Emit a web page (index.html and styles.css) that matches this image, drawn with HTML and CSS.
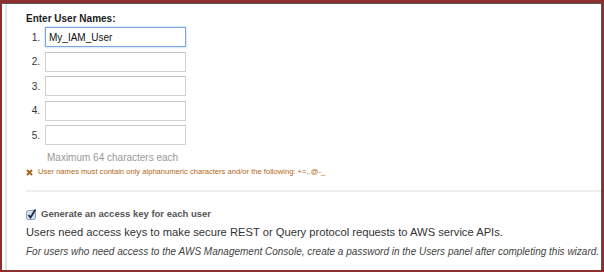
FILE: index.html
```html
<!DOCTYPE html>
<html lang="en">
<head>
  <meta charset="UTF-8">
  <title>Create User</title>
  <link rel="stylesheet" href="styles.css">
</head>
<body>

<div class="frame">
  <div class="inner">
    <div class="panel">
      <div class="title">Enter User Names:</div>

      <div class="name-rows">
        <label class="num" for="user1">1.</label>
        <input type="text" id="user1" class="name-input focused" value="My_IAM_User">
        <label class="num" for="user2">2.</label>
        <input type="text" id="user2" class="name-input">
        <label class="num" for="user3">3.</label>
        <input type="text" id="user3" class="name-input">
        <label class="num" for="user4">4.</label>
        <input type="text" id="user4" class="name-input">
        <label class="num" for="user5">5.</label>
        <input type="text" id="user5" class="name-input">
      </div>

      <div class="hint">Maximum 64 characters each</div>
      <div class="error">
        <svg width="7" height="7" viewBox="0 0 7 7"><path d="M1 1 L6 6 M6 1 L1 6" stroke="#a9651c" stroke-width="2"/></svg>
        <span>User names must contain only alphanumeric characters and/or the following: +=,.@-_</span>
      </div>

      <div class="separator"></div>

      <div class="check-row">
        <svg width="11" height="11" viewBox="0 0 11 11">
          <rect x="0.5" y="1.5" width="9" height="9" rx="2" fill="#cfdff2" stroke="#8a9bb0"/>
          <path d="M2.5 6 L4.5 8.5 L9.5 0.5" fill="none" stroke="#1c2c48" stroke-width="1.8"/>
        </svg>
        <span>Generate an access key for each user</span>
      </div>
      <p class="info">Users need access keys to make secure REST or Query protocol requests to AWS service APIs.</p>
      <p class="info note">For users who need access to the AWS Management Console, create a password in the Users panel after completing this wizard.</p>
    </div>
  </div>
</div>

</body>
</html>
```

FILE: styles.css
```css
body {
  margin: 0;
  font-family: 'Liberation Sans', Arial, sans-serif;
  background: #fff;
}

.frame {
  width: 604px;
  height: 272px;
  box-sizing: border-box;
  border: 2px solid #8e2e2e;
  border-top-width: 3px;
}

.inner {
  height: 100%;
  box-sizing: border-box;
  border-top: 1px solid #555;
  border-right: 1px solid #555;
  padding-left: 3px;
}

.panel {
  height: 100%;
  box-sizing: border-box;
  border-left: 2px solid #e2e2e2;
  padding: 9px 0 0 19px;
}

.title {
  font-size: 10px;
  font-weight: bold;
  line-height: 12px;
  color: #1a1a1a;
  margin-bottom: 2px;
}

.name-rows {
  display: grid;
  grid-template-columns: 14px 141px;
  column-gap: 5px;
  row-gap: 4.5px;
  align-items: center;
}

.num {
  font-size: 10px;
  color: #333;
  text-align: right;
}

.name-input {
  box-sizing: border-box;
  width: 141px;
  height: 20px;
  margin: 0;
  padding: 0 3px;
  border: 1px solid #d2d2d2;
  border-top-color: #c4c4c4;
  font-family: 'Liberation Sans', Arial, sans-serif;
  font-size: 10px;
  color: #111;
  outline: none;
}

.name-input.focused {
  border-color: #7aa7d8;
  box-shadow: 0 0 2px #9fc3ec;
}

.hint {
  margin-top: 7px;
  padding-left: 21px;
  font-size: 10px;
  line-height: 12px;
  color: #999;
}

.error {
  display: flex;
  align-items: center;
  gap: 5px;
  margin-top: 3px;
  font-size: 7.6px;
  line-height: 10px;
  color: #b36715;
}

.separator {
  height: 2px;
  background: #eeeeee;
  margin-top: 13px;
}

.check-row {
  display: flex;
  align-items: center;
  gap: 4px;
  margin-top: 15px;
  font-size: 9.5px;
  font-weight: bold;
  line-height: 14px;
  color: #555;
}

.info {
  margin: 4px 0 0;
  font-size: 11.2px;
  line-height: 14px;
  color: #333;
}

.note {
  margin-top: 6px;
  font-size: 10px;
  font-style: italic;
  color: #444;
}
```
